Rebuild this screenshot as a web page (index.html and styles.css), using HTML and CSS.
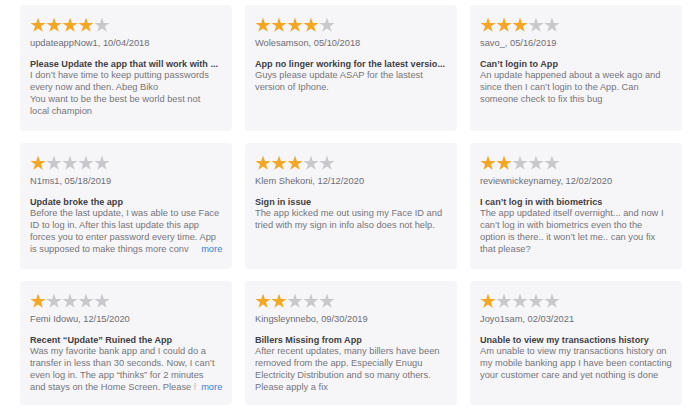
FILE: index.html
```html
<!DOCTYPE html>
<html>
<head>
<meta charset="utf-8">
<link rel="stylesheet" href="styles.css">
</head>
<body>
<svg class="defs" width="0" height="0" aria-hidden="true">
  <defs>
    <symbol id="star" viewBox="0 0 16 15.4">
      <polygon points="8,0.4 9.8,5.92 15.61,5.93 10.91,9.35 12.7,14.87 8,11.46 3.3,14.87 5.09,9.35 0.39,5.93 6.2,5.92"/>
    </symbol>
  </defs>
</svg>
<main class="grid">
  <article class="card">
    <svg class="stars" viewBox="0 0 80 15.4"><use href="#star" x="0" width="16" class="on"/><use href="#star" x="16" width="16" class="on"/><use href="#star" x="32" width="16" class="on"/><use href="#star" x="48" width="16" class="on"/><use href="#star" x="64" width="16" class="off"/></svg>
    <div class="author">updateappNow1, 10/04/2018</div>
    <h3 class="title">Please Update the app that will work with ...</h3>
    <p class="body">I don’t have time to keep putting passwords every now and then. Abeg Biko<br>You want to be the best be world best not<br>local champion</p>
  </article>
  <article class="card">
    <svg class="stars" viewBox="0 0 80 15.4"><use href="#star" x="0" width="16" class="on"/><use href="#star" x="16" width="16" class="on"/><use href="#star" x="32" width="16" class="on"/><use href="#star" x="48" width="16" class="on"/><use href="#star" x="64" width="16" class="off"/></svg>
    <div class="author">Wolesamson, 05/10/2018</div>
    <h3 class="title">App no linger working for the latest versio...</h3>
    <p class="body">Guys please update ASAP for the lastest version of Iphone.</p>
  </article>
  <article class="card">
    <svg class="stars" viewBox="0 0 80 15.4"><use href="#star" x="0" width="16" class="on"/><use href="#star" x="16" width="16" class="on"/><use href="#star" x="32" width="16" class="on"/><use href="#star" x="48" width="16" class="off"/><use href="#star" x="64" width="16" class="off"/></svg>
    <div class="author">savo_, 05/16/2019</div>
    <h3 class="title">Can’t login to App</h3>
    <p class="body">An update happened about a week ago and since then I can’t login to the App. Can someone check to fix this bug</p>
  </article>
  <article class="card">
    <svg class="stars" viewBox="0 0 80 15.4"><use href="#star" x="0" width="16" class="on"/><use href="#star" x="16" width="16" class="off"/><use href="#star" x="32" width="16" class="off"/><use href="#star" x="48" width="16" class="off"/><use href="#star" x="64" width="16" class="off"/></svg>
    <div class="author">N1ms1, 05/18/2019</div>
    <h3 class="title">Update broke the app</h3>
    <p class="body">Before the last update, I was able to use Face ID to log in. After this last update this app forces you to enter password every time. App is supposed to make things more conv<span class="more">more</span></p>
  </article>
  <article class="card">
    <svg class="stars" viewBox="0 0 80 15.4"><use href="#star" x="0" width="16" class="on"/><use href="#star" x="16" width="16" class="on"/><use href="#star" x="32" width="16" class="on"/><use href="#star" x="48" width="16" class="off"/><use href="#star" x="64" width="16" class="off"/></svg>
    <div class="author">Klem Shekoni, 12/12/2020</div>
    <h3 class="title">Sign in issue</h3>
    <p class="body">The app kicked me out using my Face ID and tried with my sign in info also does not help.</p>
  </article>
  <article class="card">
    <svg class="stars" viewBox="0 0 80 15.4"><use href="#star" x="0" width="16" class="on"/><use href="#star" x="16" width="16" class="on"/><use href="#star" x="32" width="16" class="off"/><use href="#star" x="48" width="16" class="off"/><use href="#star" x="64" width="16" class="off"/></svg>
    <div class="author">reviewnickeynamey, 12/02/2020</div>
    <h3 class="title">I can’t log in with biometrics</h3>
    <p class="body">The app updated itself overnight... and now I can’t log in with biometrics even tho the<br>option is there.. it won’t let me.. can you fix<br>that please?</p>
  </article>
  <article class="card">
    <svg class="stars" viewBox="0 0 80 15.4"><use href="#star" x="0" width="16" class="on"/><use href="#star" x="16" width="16" class="off"/><use href="#star" x="32" width="16" class="off"/><use href="#star" x="48" width="16" class="off"/><use href="#star" x="64" width="16" class="off"/></svg>
    <div class="author">Femi Idowu, 12/15/2020</div>
    <h3 class="title">Recent “Update” Ruined the App</h3>
    <p class="body">Was my favorite bank app and I could do a transfer in less than 30 seconds. Now, I can’t even log in. The app “thinks” for 2 minutes<br>and stays on the Home Screen. Please f<span class="more">more</span></p>
  </article>
  <article class="card">
    <svg class="stars" viewBox="0 0 80 15.4"><use href="#star" x="0" width="16" class="on"/><use href="#star" x="16" width="16" class="on"/><use href="#star" x="32" width="16" class="off"/><use href="#star" x="48" width="16" class="off"/><use href="#star" x="64" width="16" class="off"/></svg>
    <div class="author">Kingsleynnebo, 09/30/2019</div>
    <h3 class="title">Billers Missing from App</h3>
    <p class="body">After recent updates, many billers have been removed from the app. Especially Enugu Electricity Distribution and so many others. Please apply a fix</p>
  </article>
  <article class="card">
    <svg class="stars" viewBox="0 0 80 15.4"><use href="#star" x="0" width="16" class="on"/><use href="#star" x="16" width="16" class="off"/><use href="#star" x="32" width="16" class="off"/><use href="#star" x="48" width="16" class="off"/><use href="#star" x="64" width="16" class="off"/></svg>
    <div class="author">Joyo1sam, 02/03/2021</div>
    <h3 class="title">Unable to view my transactions history</h3>
    <p class="body">Am unable to view my transactions history on my mobile banking app I have been contacting your customer care and yet nothing is done</p>
  </article>
</main>
</body>
</html>
```

FILE: styles.css
```css
* { box-sizing: border-box; }
html, body { margin: 0; padding: 0; background: #ffffff; }
body {
  font-family: "Liberation Sans", Arial, sans-serif;
  font-size: 9.3px;
  color: #76767b;
}
.defs { position: absolute; width: 0; height: 0; overflow: hidden; }
.grid {
  display: grid;
  grid-template-columns: repeat(3, 212px);
  grid-template-rows: 126px 126px 124px;
  column-gap: 13px;
  row-gap: 12px;
  padding: 5px 0 0 20px;
}
.card {
  background: #f6f5f8;
  border-radius: 4px;
  padding: 12px 9.7px 0 10px;
  display: flex;
  flex-direction: column;
}
.stars { width: 80px; height: 15.4px; display: block; }
.stars .on { fill: #f5a623; }
.stars .off { fill: #c9c9cd; }
.author {
  margin-top: 5px;
  line-height: 12px;
  color: #6e6e73;
}
.title {
  margin: 9px 0 0;
  font-size: 9.1px;
  line-height: 12px;
  font-weight: 700;
  color: #3f3f44;
  white-space: nowrap;
}
.body {
  margin: 0;
  line-height: 11.8px;
}
.more {
  float: right;
  position: relative;
  margin-left: -24px;
  padding-left: 2px;
  color: #3b82d6;
  background: #f6f5f8;
}
.more::before {
  content: "";
  position: absolute;
  top: 0;
  bottom: 0;
  right: 100%;
  width: 10px;
  background: linear-gradient(to right, rgba(246,245,248,0), #f6f5f8);
}
```
